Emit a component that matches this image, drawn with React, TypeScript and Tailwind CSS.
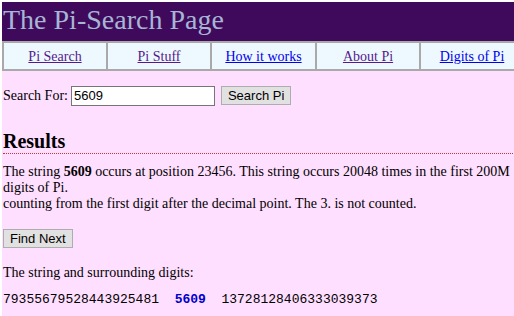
import React from "react";

const navLinks = [
  { label: "Pi Search", visited: true, w: "w-[104px]" },
  { label: "Pi Stuff", visited: true, w: "w-[104px]" },
  { label: "How it works", visited: false, w: "w-[105px]" },
  { label: "About Pi", visited: true, w: "w-[104px]" },
  { label: "Digits of Pi", visited: false, w: "w-[104px]" },
];

export default function App() {
  return (
    <div className="w-[514px] h-[316px] overflow-hidden bg-white pl-[2px] pt-[2px] font-['Liberation_Serif',serif] text-black">
      <div className="w-[525px] h-[314px] bg-[#ffdfff]">
        <div className="h-[39px] bg-[#400a5c] pl-[1px] pt-[1px]">
          <h1 className="text-[28px] leading-[34px] text-[#a6b6d4]">The Pi-Search Page</h1>
        </div>

        <nav className="flex h-[30px] bg-[#eef8ff] border-2 border-r-0 border-[#a9a9a9]">
          {navLinks.map((item) => (
            <div
              key={item.label}
              className={`${item.w} shrink-0 flex items-center justify-center border-r-2 border-[#a9a9a9] text-[14px]`}
            >
              <a
                href="#"
                className={`underline ${item.visited ? "text-[#551a8b]" : "text-[#0000ee]"}`}
              >
                {item.label}
              </a>
            </div>
          ))}
        </nav>

        <div className="pl-[1px]">
          <form className="mt-[14px] flex items-center text-[14px]">
            <span>Search For:</span>
            <input
              defaultValue="5609"
              className="ml-[3px] w-[144px] h-[20px] bg-white border border-[#767676] px-[2px] text-[13px] font-['Liberation_Sans',sans-serif] outline-none"
            />
            <button
              type="button"
              className="ml-[6px] h-[19px] px-[6px] bg-[#e1e1e1] border border-[#adadad] text-[13px] leading-none font-['Liberation_Sans',sans-serif]"
            >
              Search Pi
            </button>
          </form>

          <h2 className="mt-[24px] text-[20px] leading-[23px] font-bold border-b border-dotted border-[#cc3333]">
            Results
          </h2>

          <p className="mt-[10px] text-[14px] leading-[16px]">
            The string <b>5609</b> occurs at position 23456. This string occurs 20048 times in the first 200M digits of Pi.
            <br />
            counting from the first digit after the decimal point. The 3. is not counted.
          </p>

          <button
            type="button"
            className="block mt-[17px] h-[19px] px-[6px] bg-[#e1e1e1] border border-[#adadad] text-[13px] leading-none font-['Liberation_Sans',sans-serif]"
          >
            Find Next
          </button>

          <p className="mt-[17px] text-[14px] leading-[16px]">The string and surrounding digits:</p>

          <p className="mt-[11px] text-[13px] leading-[15px] whitespace-pre font-['Liberation_Mono',monospace]">
            {"79355679528443925481  "}
            <b className="text-[#0000cc]">5609</b>
            {"  13728128406333039373"}
          </p>
        </div>
      </div>
    </div>
  );
}
